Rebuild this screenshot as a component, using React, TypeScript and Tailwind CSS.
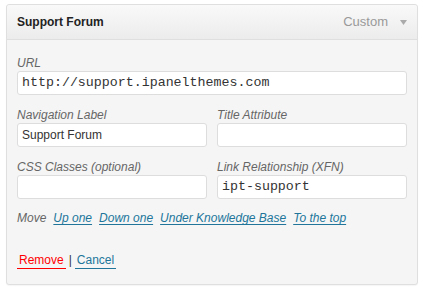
const sans = { fontFamily: '"Liberation Sans", Arial, sans-serif' };

function Field({ label, value, mono }: { label: string; value?: string; mono?: boolean }) {
  return (
    <div className="flex flex-col">
      <span className="text-[12px] leading-[15px] italic text-[#666]">{label}</span>
      <div
        className={`flex h-[24px] items-center rounded-[3px] border border-[#dddddd] bg-white px-[4px] text-[#333] ${
          mono ? "text-[13.3px] [font-family:'Liberation_Mono',monospace]" : "text-[12px]"
        }`}
      >
        {value}
      </div>
    </div>
  );
}

export default function App() {
  return (
    <div className="h-[287px] w-[423px] bg-white pl-[6px] pt-[4px]" style={sans}>
      <div className="w-[412px] rounded-[3px] border border-[#dfdfdf] bg-[#f5f5f5] shadow-[0_1px_1px_rgba(0,0,0,0.04)]">
        <div className="flex h-[35px] items-center justify-between rounded-t-[3px] border-b border-[#dfdfdf] bg-gradient-to-b from-[#f9f9f9] to-[#ececec] pl-[10px] pr-[10px]">
          <span className="text-[12px] font-bold text-[#222]">Support Forum</span>
          <div className="flex items-center gap-[12px]">
            <span className="text-[13px] text-[#999]">Custom</span>
            <svg width="7" height="5" viewBox="0 0 7 5" className="mt-[1px]">
              <polygon points="0,0 7,0 3.5,5" fill="#aaaaaa" />
            </svg>
          </div>
        </div>
        <div className="px-[10px] pb-[15px] pt-[16px]">
          <Field label="URL" value="http://support.ipanelthemes.com" mono />
          <div className="mt-[13px] grid grid-cols-2 gap-x-[10px] gap-y-[13px]">
            <Field label="Navigation Label" value="Support Forum" />
            <Field label="Title Attribute" />
            <Field label="CSS Classes (optional)" />
            <Field label="Link Relationship (XFN)" value="ipt-support" mono />
          </div>
          <div className="mt-[12px] flex gap-[7px] text-[12px] leading-[15px] italic">
            <span className="text-[#666]">Move</span>
            <a className="text-[#21759b] underline underline-offset-[2px]">Up one</a>
            <a className="text-[#21759b] underline underline-offset-[2px]">Down one</a>
            <a className="text-[#21759b] underline underline-offset-[2px]">Under Knowledge Base</a>
            <a className="text-[#21759b] underline underline-offset-[2px]">To the top</a>
          </div>
          <div className="mt-[27px] flex items-start text-[12px] leading-[15px]">
            <a className="border-b border-[#ff0000] px-[2px] text-[#ff0000]">Remove</a>
            <span className="mx-[3px] text-[#333]">|</span>
            <a className="border-b border-[#21759b] px-[2px] text-[#21759b]">Cancel</a>
          </div>
        </div>
      </div>
    </div>
  );
}
